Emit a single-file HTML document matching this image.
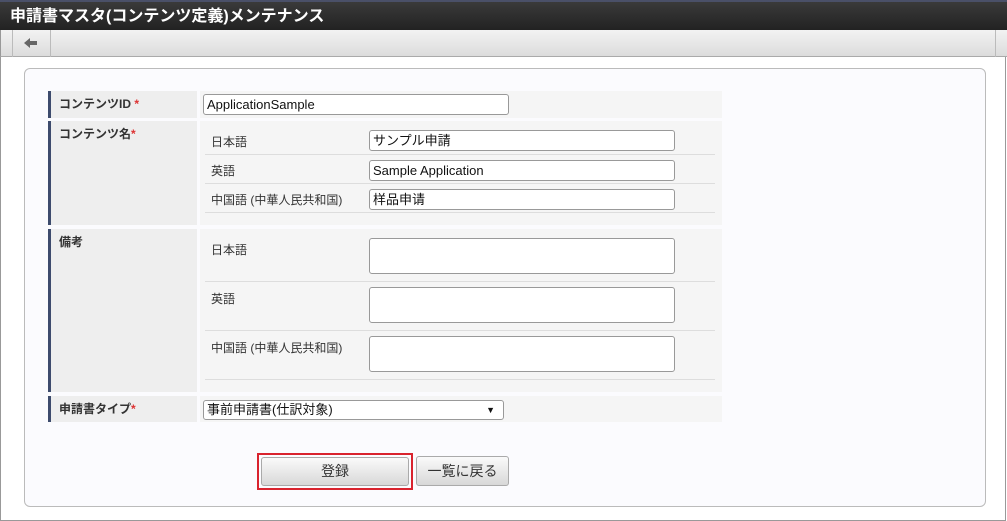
<!DOCTYPE html>
<html><head><meta charset="utf-8"><style>
*{box-sizing:border-box;margin:0;padding:0}
body{width:1007px;height:521px;overflow:hidden;background:#fff;font-family:"Liberation Sans","Noto Sans CJK JP",sans-serif;font-size:12px;color:#333;position:relative}
.a{position:absolute}
.title{left:0;top:0;width:1007px;height:30px;background:linear-gradient(#3a3a3a,#222);color:#fff;font-size:16px;font-weight:bold;line-height:30px;padding-left:10px;border-top:2px solid #4a5068}
.tb{left:0;top:30px;width:1007px;height:27px;background:linear-gradient(#f2f2f2,#dcdcdc);border-bottom:1px solid #aaa;border-left:1px solid #999}
.frame{left:0;top:57px;width:1006px;height:464px;border-left:1px solid #999;border-right:1px solid #999;border-bottom:1px solid #999}
.panel{left:24px;top:68px;width:962px;height:439px;border:1px solid #bbb;border-radius:6px;background:#fbfbfe}
.lab{background:#eee;border-left:3px solid #3d4b6d;font-weight:bold;padding:4px 0 0 8px;font-size:12px}
.val{background:#f5f5f5}
.inp{background:#fff;border:1px solid #999;border-radius:3px;font-size:13px;padding:1px 3px;line-height:17px;color:#111}
.sub{color:#333;font-size:12px}
.sep{height:1px;background:#ddd}
.req{color:#d33}
.btn{border:1px solid #aaa;border-radius:3px;background:linear-gradient(#fafafa,#d8d8d8);font-size:14px;text-align:center;color:#333}
</style></head><body>
<div class="a title">申請書マスタ(コンテンツ定義)メンテナンス</div>
<div class="a tb"></div>
<div class="a" style="left:12px;top:30px;width:1px;height:27px;background:#bbb"></div>
<div class="a" style="left:50px;top:30px;width:1px;height:27px;background:#bbb"></div>
<div class="a" style="left:995px;top:30px;width:1px;height:27px;background:#bbb"></div>
<svg class="a" style="left:24px;top:37px" width="14" height="12"><path d="M0 6 L6 1 L6 4 L13 4 L13 8 L6 8 L6 11 Z" fill="#666"/></svg>
<div class="a frame"></div>
<div class="a panel"></div>

<div class="a lab" style="left:48px;top:91px;width:149px;height:27px">コンテンツID <span class="req">*</span></div>
<div class="a val" style="left:200px;top:91px;width:522px;height:27px"></div>
<div class="a inp" style="left:203px;top:94px;width:306px;height:21px">ApplicationSample</div>

<div class="a lab" style="left:48px;top:121px;width:149px;height:104px">コンテンツ名<span class="req">*</span></div>
<div class="a val" style="left:200px;top:121px;width:522px;height:104px"></div>
<div class="a sub" style="left:211px;top:133px">日本語</div>
<div class="a inp" style="left:369px;top:130px;width:306px;height:21px">サンプル申請</div>
<div class="a sep" style="left:205px;top:154px;width:510px"></div>
<div class="a sub" style="left:211px;top:162px">英語</div>
<div class="a inp" style="left:369px;top:160px;width:306px;height:21px">Sample Application</div>
<div class="a sep" style="left:205px;top:183px;width:510px"></div>
<div class="a sub" style="left:211px;top:191px">中国語 (中華人民共和国)</div>
<div class="a inp" style="left:369px;top:189px;width:306px;height:21px">样品申请</div>
<div class="a sep" style="left:205px;top:212px;width:510px"></div>

<div class="a lab" style="left:48px;top:229px;width:149px;height:163px">備考</div>
<div class="a val" style="left:200px;top:229px;width:522px;height:163px"></div>
<div class="a sub" style="left:211px;top:241px">日本語</div>
<div class="a inp" style="left:369px;top:238px;width:306px;height:36px"></div>
<div class="a sep" style="left:205px;top:281px;width:510px"></div>
<div class="a sub" style="left:211px;top:290px">英語</div>
<div class="a inp" style="left:369px;top:287px;width:306px;height:36px"></div>
<div class="a sep" style="left:205px;top:330px;width:510px"></div>
<div class="a sub" style="left:211px;top:339px">中国語 (中華人民共和国)</div>
<div class="a inp" style="left:369px;top:336px;width:306px;height:36px"></div>
<div class="a sep" style="left:205px;top:379px;width:510px"></div>

<div class="a lab" style="left:48px;top:396px;width:149px;height:26px">申請書タイプ<span class="req">*</span></div>
<div class="a val" style="left:200px;top:396px;width:522px;height:26px"></div>
<div class="a inp" style="left:203px;top:400px;width:301px;height:20px;line-height:16px">事前申請書(仕訳対象)<span style="position:absolute;right:8px;top:1px;font-size:9px">▼</span></div>

<div class="a" style="left:257px;top:453px;width:156px;height:37px;border:2px solid #d9232e"></div>
<div class="a btn" style="left:261px;top:457px;width:148px;height:29px;line-height:27px">登録</div>
<div class="a btn" style="left:416px;top:456px;width:93px;height:30px;line-height:28px">一覧に戻る</div>
</body></html>
